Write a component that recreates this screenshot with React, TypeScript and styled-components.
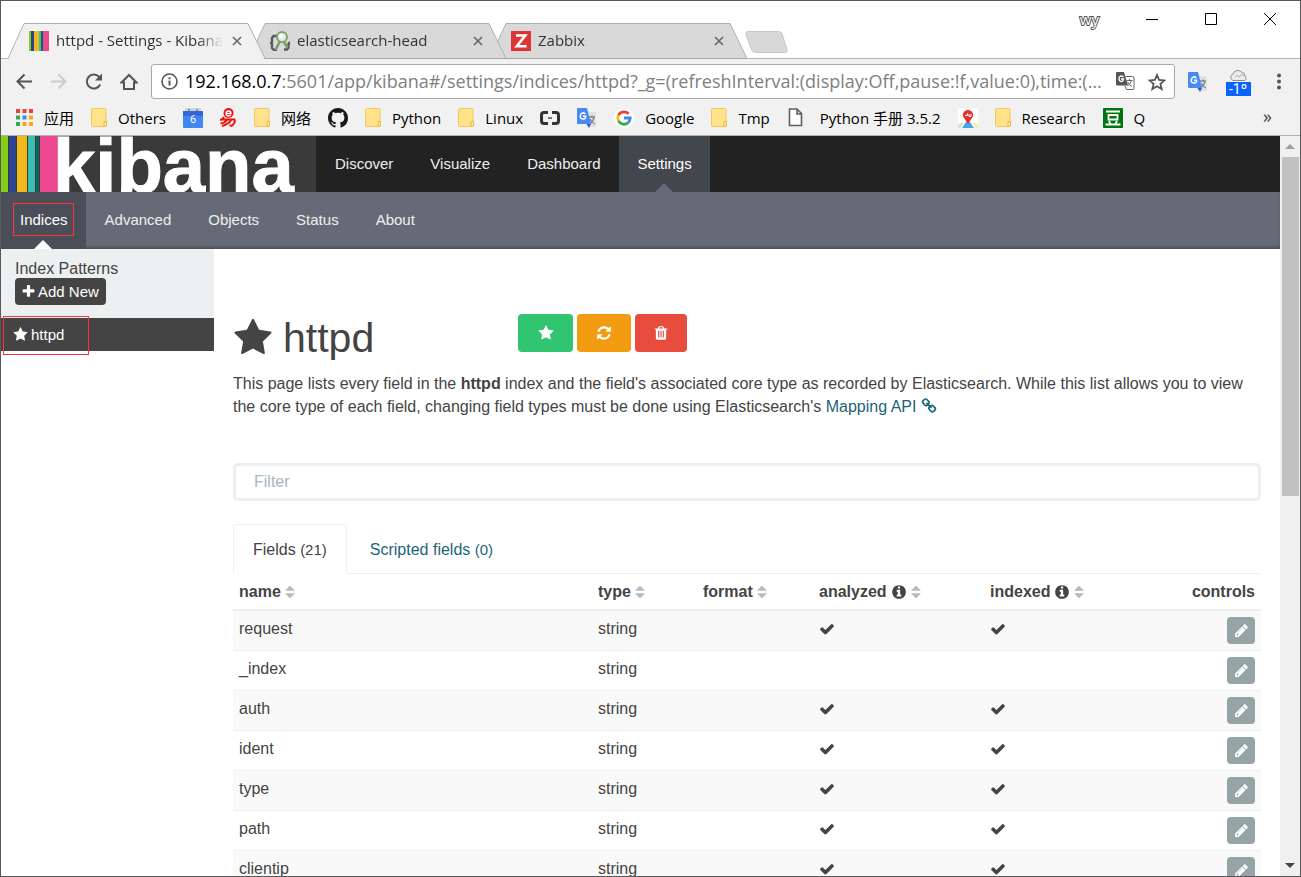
import React from 'react';
import styled, { createGlobalStyle, css } from 'styled-components';

const GlobalStyle = createGlobalStyle`
  * { box-sizing: border-box; }
  body { margin: 0; background: #fff; color: #444; font-family: "Liberation Sans", Arial, sans-serif; font-size: 16px; line-height: 23px; }
  button { font: inherit; border: 0; padding: 0; background: none; color: inherit; cursor: pointer; }
  a { color: inherit; text-decoration: none; }
  svg { display: block; flex: none; }
`;

/* ---------- icons ---------- */

const glyphs = {
  star: 'M1728 647q0 22-26 48l-363 354 86 500q1 7 1 20 0 21-10.5 35.5t-30.5 14.5q-19 0-40-12l-449-236-449 236q-22 12-40 12-21 0-31.5-14.5t-10.5-35.5q0-6 2-20l86-500-364-354q-25-27-25-48 0-37 56-46l502-73 225-455q19-41 49-41t49 41l225 455 502 73q56 9 56 46z',
  check: 'M1671 566q0 40-28 68l-724 724-136 136q-28 28-68 28t-68-28l-136-136-362-362q-28-28-28-68t28-68l136-136q28-28 68-28t68 28l294 295 656-657q28-28 68-28t68 28l136 136q28 28 28 68z',
  plus: 'M1600 736v192q0 40-28 68t-68 28h-416v416q0 40-28 68t-68 28h-192q-40 0-68-28t-28-68v-416h-416q-40 0-68-28t-28-68v-192q0-40 28-68t68-28h416v-416q0-40 28-68t68-28h192q40 0 68 28t28 68v416h416q40 0 68 28t28 68z',
  refresh: 'M1639 1056q0 5-1 7-64 268-268 434.5t-478 166.5q-146 0-282.5-55t-243.5-157l-129 129q-19 19-45 19t-45-19-19-45v-448q0-26 19-45t45-19h448q26 0 45 19t19 45-19 45l-137 137q71 66 161 102t187 36q134 0 250-65t186-179q11-17 53-117 8-23 30-23h192q13 0 22.5 9.5t9.5 22.5zm25-800v448q0 26-19 45t-45 19h-448q-26 0-45-19t-19-45 19-45l138-138q-148-137-349-137-134 0-250 65t-186 179q-11 17-53 117-8 23-30 23h-199q-13 0-22.5-9.5t-9.5-22.5v-7q65-268 270-434.5t480-166.5q146 0 284 55.5t245 156.5l130-129q19-19 45-19t45 19 19 45z',
  trash: 'M704 1376v-704q0-14-9-23t-23-9h-64q-14 0-23 9t-9 23v704q0 14 9 23t23 9h64q14 0 23-9t9-23zm256 0v-704q0-14-9-23t-23-9h-64q-14 0-23 9t-9 23v704q0 14 9 23t23 9h64q14 0 23-9t9-23zm256 0v-704q0-14-9-23t-23-9h-64q-14 0-23 9t-9 23v704q0 14 9 23t23 9h64q14 0 23-9t9-23zm-544-992h448l-48-117q-7-9-17-11h-317q-10 2-17 11zm928 32v64q0 14-9 23t-23 9h-96v948q0 83-47 143.5t-113 60.5h-832q-66 0-113-58.5t-47-141.5v-952h-96q-14 0-23-9t-9-23v-64q0-14 9-23t23-9h309l70-167q15-37 54-63t79-26h320q40 0 79 26t54 63l70 167h309q14 0 23 9t9 23z',
  info: 'M1152 1376v-160q0-14-9-23t-23-9h-96v-512q0-14-9-23t-23-9h-320q-14 0-23 9t-9 23v160q0 14 9 23t23 9h96v320h-96q-14 0-23 9t-9 23v160q0 14 9 23t23 9h448q14 0 23-9t9-23zm-128-896v-160q0-14-9-23t-23-9h-192q-14 0-23 9t-9 23v160q0 14 9 23t23 9h192q14 0 23-9t9-23zm640 416q0 209-103 385.5t-279.5 279.5-385.5 103-385.5-103-279.5-279.5-103-385.5 103-385.5 279.5-279.5 385.5-103 385.5 103 279.5 279.5 103 385.5z',
  sort: 'M1408 1088q0 26-19 45l-448 448q-19 19-45 19t-45-19l-448-448q-19-19-19-45t19-45 45-19h896q26 0 45 19t19 45zm0-384q0 26-19 45t-45 19h-896q-26 0-45-19t-19-45 19-45l448-448q19-19 45-19t45 19l448 448q19 19 19 45z',
  pencil: 'M491 1536l91-91-235-235-91 91v107h128v128h107zm523-928q0-22-22-22-10 0-17 7l-542 542q-7 7-7 17 0 22 22 22 10 0 17-7l542-542q7-7 7-17zm-54-192l416 416-832 832h-416v-416zm683 96q0 53-37 90l-166 166-416-416 166-165q36-38 90-38 53 0 91 38l235 234q37 39 37 91z',
  chain: 'M1520 1216q0-40-28-68l-208-208q-28-28-68-28-42 0-72 32 3 3 19 18.5t21.5 21.5 15 19 13 25.5 3.5 27.5q0 40-28 68t-68 28q-15 0-27.5-3.5t-25.5-13-19-15-21.5-21.5-18.5-19q-33 31-33 73 0 40 28 68l206 207q27 27 68 27 40 0 68-26l147-146q28-28 28-67zm-703-705q0-40-28-68l-206-207q-28-28-68-28-39 0-68 27l-147 146q-28 28-28 67 0 40 28 68l208 208q27 27 68 27 42 0 72-31-3-3-19-18.5t-21.5-21.5-15-19-13-25.5-3.5-27.5q0-40 28-68t68-28q15 0 27.5 3.5t25.5 13 19 15 21.5 21.5 18.5 19q33-31 33-73zm895 705q0 120-85 203l-147 146q-83 83-203 83-121 0-204-85l-206-207q-83-83-83-203 0-123 88-209l-88-88q-86 88-208 88-120 0-204-84l-208-208q-84-84-84-204t85-203l147-146q83-83 203-83 121 0 204 85l206 207q83 83 83 203 0 123-88 209l88 88q86-88 208-88 120 0 204 84l208 208q84 84 84 204z',
};

const GlyphSvg = styled.svg<{ $tone?: string }>`
  fill: ${(p) => p.$tone || 'currentColor'};
`;

function Glyph({ name, size = 16, tone }: { name: keyof typeof glyphs; size?: number; tone?: string }) {
  const narrow = name === 'sort';
  return (
    <GlyphSvg
      width={narrow ? 10 : size}
      height={size}
      viewBox={narrow ? '336 0 1120 1792' : '0 0 1792 1792'}
      $tone={tone}
      aria-hidden
    >
      <path d={glyphs[name]} />
    </GlyphSvg>
  );
}

const KibanaIcon = () => (
  <svg width="20" height="20">
    <path fill="#86cd17" d="M0 0h2v20H0z" />
    <path fill="#2b4590" d="M2 0h3v20H2z" />
    <path fill="#f2b91c" d="M5 0h5v20H5z" />
    <path fill="#3cbfb3" d="M10 0h2v20h-2z" />
    <path fill="#086a5f" d="M12 0h2v20h-2z" />
    <path fill="#ec478f" d="M14 0h6v20h-6z" />
  </svg>
);

const HeadIcon = () => (
  <svg width="20" height="20" fill="none">
    <path d="M7 5H3.500L2 7v4l-1 1 1 1v4l2 2h3M14 18.500h3l1.500-2V13l1-1-1-1" stroke="#565b5f" strokeWidth="2.400" />
    <path d="M9.500 11L6 18" stroke="#7d9e63" strokeWidth="2.600" strokeLinecap="round" />
    <path d="M14 11l3 5" stroke="#7d9e63" strokeWidth="2.600" strokeLinecap="round" />
    <circle cx="12" cy="6" r="5" fill="#dfeaf8" stroke="#7fa65c" strokeWidth="2" />
    <circle cx="11" cy="5" r="2" fill="#fff" />
  </svg>
);

const ZabbixIcon = () => (
  <svg width="20" height="20">
    <path fill="#dc3535" d="M0 0h20v20H0z" />
    <path fill="none" stroke="#fff" strokeWidth="2.600" d="M5 4.500h9.200L5.800 15.300H15.500" />
  </svg>
);

const FolderIcon = () => (
  <svg width="16" height="19">
    <path d="M1.500.5H14q1 0 1 1v11.500l1 1V17q0 1.500-1.500 1.500h-13Q.5 18.500.5 17V1.500q0-1 1-1z" fill="#ffe28a" stroke="#efc95c" />
    <path d="M13 18v-4.500h2.500V17q0 1-1 1z" fill="#ffe79b" stroke="#e8bb44" />
  </svg>
);

const AppsIcon = () => (
  <svg width="17" height="17">
    {['#ea4335', '#ea4335', '#ea4335', '#34a853', '#4285f4', '#fba81b', '#34a853', '#fba81b', '#fba81b'].map((c, i) => (
      <rect key={i} x={(i % 3) * 6.5} y={Math.floor(i / 3) * 6.5} width="4" height="4" fill={c} />
    ))}
  </svg>
);

const CalendarIcon = () => (
  <svg width="20" height="20">
    <path fill="#cfd2d6" d="M2 0h16v4H2z" />
    <path fill="#3367d6" d="M0 3h20v9H0z" />
    <path fill="#4285f4" d="M0 8h20v11q0 1-1 1H1q-1 0-1-1z" />
    <path fill="#8f9499" d="M5 1h2v2H5zM13 1h2v2h-2z" />
    <text x="10" y="15" textAnchor="middle" fontFamily="Roboto, sans-serif" fontSize="11" fill="#fff">6</text>
  </svg>
);

const NeteaseIcon = () => (
  <svg width="17" height="19" fill="none" stroke="#f20d0d">
    <circle cx="8.500" cy="5" r="5" fill="#f20d0d" stroke="none" />
    <path d="M6 5.500h5q0-2.500-2.500-2.500T6 5.500t3 2.500l2-1" stroke="#fff" strokeWidth="1.300" />
    <path d="M4 9Q3 11 0 12M2 11.500h12.500q1.500 3-3 6.500l-2-1M7 12q-2 3-6.500 3.500M11 12q-2 4-9 6" strokeWidth="1.900" />
  </svg>
);

const GithubIcon = () => (
  <svg width="20" height="20" viewBox="0 0 16 16">
    <path fill="#181616" d="M8 0C3.580 0 0 3.580 0 8c0 3.540 2.290 6.530 5.470 7.590.4.070.55-.17.55-.38 0-.19-.01-.82-.01-1.490-2.010.37-2.530-.49-2.690-.94-.09-.23-.48-.94-.82-1.130-.28-.15-.68-.52-.01-.53.63-.01 1.080.58 1.230.82.72 1.210 1.870.87 2.330.66.070-.52.28-.87.51-1.070-1.780-.2-3.640-.89-3.640-3.950 0-.87.31-1.590.82-2.150-.08-.2-.36-1.020.08-2.120 0 0 .67-.21 2.200.82.64-.18 1.320-.27 2-.27s1.360.09 2 .27c1.530-1.040 2.200-.82 2.200-.82.44 1.100.16 1.920.08 2.120.51.56.82 1.270.82 2.150 0 3.070-1.870 3.750-3.650 3.950.29.25.54.73.54 1.480 0 1.070-.01 1.930-.01 2.200 0 .21.15.46.55.38A8.010 8.010 0 0 0 16 8c0-4.420-3.580-8-8-8z" />
  </svg>
);

const BracketIcon = () => (
  <svg width="20" height="14" fill="none" stroke="#333" strokeWidth="3">
    <path d="M8 1.500H4Q1.500 1.500 1.500 4v6q0 2.500 2.500 2.500h4M12 1.500h4q2.500 0 2.500 2.500v6q0 2.500-2.500 2.500h-4" />
    <path d="M8 7h4" strokeWidth="2" stroke="#777" />
  </svg>
);

const TranslateIcon = () => (
  <svg width="20" height="20" fill="none">
    <path fill="#dfe1e3" d="M8 4h10q1 0 1 1v14h-8z" />
    <path stroke="#7a8894" strokeWidth="1.300" d="M12 9h6M15 7.500V9M17 9q-1 5-4.500 6.500M13 11q1.500 3.500 5 5" />
    <path fill="#4889f4" d="M1 0h9l4 16H1q-1 0-1-1V1q0-1 1-1z" />
    <path fill="#3a5bbf" d="M9.500 16H14l-2 4z" />
    <path stroke="#fff" strokeWidth="1.500" d="M8.300 6Q6.800 4.500 5.300 5T3.300 8t2.500 3T8.600 8.300H6" />
  </svg>
);

const GoogleIcon = () => (
  <svg width="20" height="20" viewBox="0 0 20 20" fill="none" strokeWidth="2.800">
    <circle cx="10" cy="10" r="10" fill="#fff" />
    <path stroke="#ea4335" d="M14.600 5.800A6.200 6.200 0 0 0 4.500 7.200" />
    <path stroke="#fbbc05" d="M4.500 7.200a6.200 6.200 0 0 0 0 5.600" />
    <path stroke="#34a853" d="M4.500 12.800a6.200 6.200 0 0 0 9.700 1.800" />
    <path stroke="#4285f4" d="M14.200 14.600A6.200 6.200 0 0 0 16.200 10H10" />
  </svg>
);

const FileIcon = () => (
  <svg width="22" height="19" viewBox="-1 0 22 19" fill="#fff" stroke="#5f5f5f" strokeWidth="1.600">
    <path d="M1.500 1H9l4.500 4.500V17.500h-12zM9 1v5h4.500" />
  </svg>
);

const MapIcon = () => (
  <svg width="20" height="20">
    <rect width="20" height="20" rx="2" fill="#fff" />
    <path fill="#cdeac0" d="M0 16l6-2-3 6H0z" />
    <path fill="#f5eeb4" d="M20 16l-6-2 3 6h3z" />
    <path fill="#4aa3f0" d="M8 14h4l4 6H4z" />
    <path fill="#e5322d" d="M10 16L6 10a5 5 0 1 1 8 0z" />
    <path stroke="#fff" d="M7 7.500h2.500V5.500M11 6v2.500h2V6" fill="none" />
  </svg>
);

const DoubanIcon = () => (
  <svg width="20" height="20">
    <rect width="20" height="20" rx="1" fill="#00750f" />
    <path fill="none" stroke="#fff" strokeWidth="1.800" d="M3 3.500h14M5.500 7h9v4.500h-9zM6 13l1.500 3M14 13l-1.500 3M2.500 16.500h15" />
  </svg>
);

const AddressTranslateIcon = () => (
  <svg width="19" height="19" fill="none">
    <path d="M9.500 4.500h7q1.500 0 1.500 1.500v10.500q0 1-1 1h-6.500L9 14" stroke="#666" fill="#fff" />
    <path d="M10.500 8.500h6M13.500 7v1.500M15.500 8.500q-1 4-4 5.500M11.500 10q1.500 3 4.500 4.500" stroke="#666" />
    <path d="M1 0h7l4 13.500H1q-1 0-1-1V1q0-1 1-1z" fill="#555" />
    <path d="M7.500 5Q6 3.500 4.500 4.200T3 7t2 2.500T7.500 7H5" stroke="#fff" strokeWidth="1.400" />
  </svg>
);

const WeatherIcon = () => (
  <svg width="26" height="28">
    <path d="M7 12.500a3.500 3.500 0 0 1 0-6.500 5 4.500 0 0 1 9-1.500 3.500 3.500 0 0 1 3 3.500 3 3 0 0 1 0 4.500z" fill="#ececec" stroke="#8d8d8d" />
    <path d="M9 9q2-3 5 0M14 8q2-3 4 0" fill="none" stroke="#aaa" />
    <path fill="#0a62ff" d="M0 14h25v14H0z" />
    <text x="12" y="26" textAnchor="middle" fontFamily="Roboto, sans-serif" fontSize="14" fill="#fff">-1º</text>
  </svg>
);

/* ---------- browser frame ---------- */

const Browser = styled.div`
  height: 100vh;
  display: flex;
  flex-direction: column;
  border: 1px solid #58585a;
  overflow: hidden;
`;

const uiFont = css`
  font-family: "Open Sans", "Noto Sans CJK SC", sans-serif;
`;

const TabStrip = styled.header`
  ${uiFont}
  display: flex;
  align-items: flex-end;
  height: 58px;
  flex: none;
  padding-left: 7px;
  font-size: 15px;
  line-height: 20px;
  box-shadow: inset 0 -1px #b5b5b5;
`;

const Tab = styled.div<{ $level: number }>`
  position: relative;
  z-index: ${(p) => p.$level};
  display: flex;
  align-items: center;
  gap: 7px;
  width: 257px;
  height: 36px;
  padding: 0 21px;
  & + & { margin-left: -16px; }
`;

const TabShape = styled.svg`
  position: absolute;
  inset: 0;
  z-index: -1;
`;

const TabTitle = styled.span`
  flex: 1;
  padding-bottom: 2px;
  overflow: hidden;
  white-space: nowrap;
  color: #333;
  mask-image: linear-gradient(to right, #000 85%, transparent);
`;

const TabClose = styled.button`
  display: flex;
  padding: 2px;
`;

const NewTab = styled.button`
  margin: 0 0 6px -2px;
`;

const WindowControls = styled.div`
  display: flex;
  align-items: center;
  align-self: flex-start;
  gap: 47px;
  height: 36px;
  margin-left: auto;
  padding-right: 24px;
`;

const Profile = styled.span`
  color: #fff;
  -webkit-text-stroke: 2px #555;
  paint-order: stroke fill;
`;

const Toolbar = styled.div`
  ${uiFont}
  display: flex;
  align-items: center;
  height: 45px;
  flex: none;
  padding: 0 12px 0 14px;
  gap: 13px;
  background: #f1f1f1;
`;

const NavButtons = styled.div`
  display: flex;
  gap: 17px;
`;

const Extensions = styled.div`
  display: flex;
  align-items: center;
  gap: 18px;
`;

const ToolButton = styled.button`
  display: flex;
  flex: none;
`;

const AddressBar = styled.div`
  display: flex;
  align-items: center;
  flex: 1;
  min-width: 0;
  height: 35px;
  padding: 0 8px 0 9px;
  border: 1px solid #a9a9a9;
  border-radius: 3px;
  background: #fff;
  font-size: 18px;
  line-height: 24px;
  color: #000;
`;

const Host = styled.label`
  padding: 0 0 2px 7px;
`;

const UrlInput = styled.input`
  flex: 1;
  min-width: 0;
  border: 0;
  padding: 0 0 2px;
  font: inherit;
  color: #808080;
  outline: 0;
  text-overflow: ellipsis;
`;

const AddressActions = styled.div`
  display: flex;
  align-items: center;
  gap: 13px;
`;

const BookmarkBar = styled.nav`
  ${uiFont}
  display: flex;
  align-items: center;
  gap: 17px;
  height: 32px;
  flex: none;
  padding: 0 28px 4px 15px;
  background: #f1f1f1;
  border-bottom: 1px solid #b0b0b0;
  font-size: 15px;
  line-height: 20px;
  color: #000;
`;

const Bookmark = styled.a`
  display: flex;
  align-items: center;
  gap: 11px;
  white-space: nowrap;
`;

const Overflow = styled.button`
  margin-left: auto;
  padding-bottom: 4px;
  font-size: 18px;
  color: #444;
`;

const Viewport = styled.div`
  display: flex;
  flex: 1;
  min-height: 0;
`;

const Page = styled.div`
  flex: 1;
  min-width: 0;
  overflow: hidden;
`;

const ScrollBar = styled.div`
  display: flex;
  flex-direction: column;
  align-items: center;
  justify-content: space-between;
  width: 20px;
  background: #f0f0f0;
`;

const ScrollTrack = styled.div`
  flex: 1;
  align-self: stretch;
  padding: 0 1px 0 2px;
`;

const ScrollThumb = styled.div`
  height: 48.5%;
  background: #c1c1c1;
`;

const ScrollButton = styled.button`
  display: flex;
  align-items: center;
  justify-content: center;
  height: 21px;
  width: 20px;
`;

/* ---------- kibana ---------- */

const NavBar = styled.nav<{ $sub?: boolean }>`
  display: flex;
  height: ${(p) => (p.$sub ? 57 : 56)}px;
  background: ${(p) => (p.$sub ? '#656a76' : '#222')};
  box-shadow: ${(p) => (p.$sub ? 'inset 0 -3px 3px -1px #4a4e58' : 'none')};
  font-size: 15px;
`;

const Logo = styled.a`
  width: 315px;
  background: #3a3a3a;
`;

const NavItem = styled.a<{ $active?: string; $arrow?: string }>`
  position: relative;
  display: flex;
  align-items: center;
  padding: 0 18px 2px 19px;
  color: ${(p) => (p.$active ? '#fff' : '#ecf0f1')};
  background: ${(p) => p.$active || 'transparent'};
  ${(p) =>
    p.$arrow &&
    css`
      &::after {
        content: '';
        position: absolute;
        bottom: 0;
        left: 50%;
        margin-left: -9px;
        border: solid transparent;
        border-width: 0 9px 9px;
        border-bottom-color: ${p.$arrow};
      }
    `}
`;

const Marker = styled.span`
  position: absolute;
  border: 1px solid #f33;
  pointer-events: none;
`;

const TabMarker = styled(Marker)<{ $quiet?: boolean }>`
  inset: 11px 12px 13px;
  border-color: ${(p) => (p.$quiet ? '#777c87' : '#f33')};
`;

const RowMarker = styled(Marker)`
  top: -2px;
  left: 2px;
  width: 86px;
  height: 39px;
`;

const Columns = styled.div`
  display: flex;
  align-items: flex-start;
`;

const Sidebar = styled.aside`
  width: 213px;
  flex: none;
`;

const SidebarHead = styled.div`
  height: 69px;
  padding: 11px 14px 0;
  background: #ecf0f1;
  line-height: 18px;
`;

const AddButton = styled.button`
  display: flex;
  align-items: center;
  gap: 2px;
  height: 27px;
  padding: 0 7px 0 6px;
  border-radius: 4px;
  background: #444;
  color: #fff;
  font-size: 15px;
`;

const PatternLink = styled.a`
  position: relative;
  display: flex;
  align-items: center;
  gap: 3px;
  height: 33px;
  padding: 0 12px;
  background: #444;
  color: #fff;
  font-size: 15px;
`;

const Main = styled.main`
  flex: 1;
  min-width: 0;
  padding: 65px 19px 0;
`;

const TitleRow = styled.div`
  display: flex;
  align-items: flex-start;
`;

const Title = styled.h1`
  display: flex;
  align-items: center;
  gap: 10px;
  width: 285px;
  margin: 0;
  font-size: 41px;
  font-weight: 400;
  line-height: 48px;
`;

const Actions = styled.div`
  display: flex;
  gap: 4px;
`;

const ActionButton = styled.button<{ $tone: string; $w: number }>`
  display: flex;
  align-items: center;
  justify-content: center;
  width: ${(p) => p.$w}px;
  height: 38px;
  border-radius: 4px;
  background: ${(p) => p.$tone};
  color: #fff;
`;

const Intro = styled.p`
  margin: 10px 0 45px;
  svg { display: inline-block; vertical-align: -2px; }
`;

const DocLink = styled.a`
  color: #1b6578;
`;

const FilterInput = styled.input`
  display: block;
  width: 100%;
  height: 38px;
  padding: 0 18px;
  border: 3px solid #ecf0f1;
  border-radius: 5px;
  background: #fff;
  color: #444;
  font: inherit;
  &::placeholder { color: #acb6c0; opacity: 1; }
`;

const FieldTabs = styled.div`
  display: flex;
  margin-top: 23px;
  border-bottom: 1px solid #ecf0f1;
`;

const FieldTab = styled.button<{ $active?: boolean }>`
  height: 50px;
  margin: 0 3px -1px 0;
  padding: 0 19px;
  border: 1px solid ${(p) => (p.$active ? '#ecf0f1' : 'transparent')};
  border-bottom-color: ${(p) => (p.$active ? '#fff' : 'transparent')};
  border-radius: 4px 4px 0 0;
  color: ${(p) => (p.$active ? '#444' : '#1b6578')};
  small { font-size: 15px; }
`;

const Table = styled.table`
  width: 100%;
  border-collapse: collapse;
  table-layout: fixed;
`;

const HeadCell = styled.th<{ $w?: number }>`
  width: ${(p) => (p.$w ? `${p.$w}px` : 'auto')};
  height: 36px;
  padding: 0 6px;
  border-bottom: 2px solid #ecf0f1;
  text-align: left;
  &:last-child { text-align: right; }
`;

const HeadLabel = styled.span`
  display: inline-flex;
  align-items: center;
  gap: 4px;
`;

const FieldRow = styled.tr`
  border-top: 1px solid #ecf0f1;
  &:nth-child(odd) { background: #f9f9f9; }
`;

const Cell = styled.td`
  height: 40px;
  padding: 6px 6px 5px;
  vertical-align: top;
  line-height: 23px;
`;

const CheckCell = styled(Cell)`
  padding-top: 10px;
`;

const EditButton = styled.button`
  display: flex;
  align-items: center;
  justify-content: center;
  width: 28px;
  height: 27px;
  margin-left: auto;
  border-radius: 4px;
  background: #95a5a6;
  color: #fff;
`;

const fields = [
  { name: 'request', marked: true },
  { name: '_index', marked: false },
  { name: 'auth', marked: true },
  { name: 'ident', marked: true },
  { name: 'type', marked: true },
  { name: 'path', marked: true },
  { name: 'clientip', marked: true },
];

const tabs = [
  { title: 'httpd - Settings - Kibana', icon: <KibanaIcon />, active: true },
  { title: 'elasticsearch-head', icon: <HeadIcon /> },
  { title: 'Zabbix', icon: <ZabbixIcon /> },
];

const bookmarks: { icon: React.ReactNode; label?: string; name?: string }[] = [
  { icon: <AppsIcon />, label: '应用' },
  { icon: <FolderIcon />, label: 'Others' },
  { icon: <CalendarIcon />, name: 'Calendar' },
  { icon: <NeteaseIcon />, name: 'Mail' },
  { icon: <FolderIcon />, label: '网络' },
  { icon: <GithubIcon />, name: 'GitHub' },
  { icon: <FolderIcon />, label: 'Python' },
  { icon: <FolderIcon />, label: 'Linux' },
  { icon: <BracketIcon />, name: 'Code' },
  { icon: <TranslateIcon />, name: 'Translate' },
  { icon: <GoogleIcon />, label: 'Google' },
  { icon: <FolderIcon />, label: 'Tmp' },
  { icon: <FileIcon />, label: 'Python 手册 3.5.2' },
  { icon: <MapIcon />, name: 'Map' },
  { icon: <FolderIcon />, label: 'Research' },
  { icon: <DoubanIcon />, label: 'Q' },
];

function SortHead({ label, info, width }: { label: string; info?: boolean; width?: number }) {
  return (
    <HeadCell $w={width}>
      <HeadLabel>
        {label}
        {info && <Glyph name="info" />}
        <Glyph name="sort" tone="#b4bcc2" />
      </HeadLabel>
    </HeadCell>
  );
}

export default function App() {
  return (
    <Browser>
      <GlobalStyle />
      <TabStrip>
        {tabs.map((t, i) => (
          <Tab key={t.title} $level={tabs.length - i}>
            <TabShape width="257" height="36" aria-hidden>
              <path d="M0 35.500L16 .5H240L257 35.500" fill={t.active ? '#f1f1f1' : '#d9d9d9'} stroke="#b0b0b0" />
              {t.active ? <path d="M1 35.500H256" stroke="#f1f1f1" /> : <path d="M0 35.500H257" stroke="#a5a5a5" />}
            </TabShape>
            {t.icon}
            <TabTitle>{t.title}</TabTitle>
            <TabClose aria-label="Close tab">
              <svg width="10" height="10" stroke="#666" strokeWidth="1.600">
                <path d="M1 1l8 8M9 1l-8 8" />
              </svg>
            </TabClose>
          </Tab>
        ))}
        <NewTab aria-label="New tab">
          <svg width="43" height="22">
            <path d="M3 .5h31q2 0 3 2l5 16q1 3-2 3H11q-3 0-4-2L1 4Q0 .5 3 .5z" fill="#d8d8d8" stroke="#c6c6c6" />
          </svg>
        </NewTab>
        <WindowControls>
          <Profile>wy</Profile>
          <ToolButton aria-label="Minimize">
            <svg width="12" height="12"><path d="M0 6.500h12" stroke="#000" /></svg>
          </ToolButton>
          <ToolButton aria-label="Maximize">
            <svg width="12" height="12"><path d="M.5.5h11v11H.5z" stroke="#000" fill="none" /></svg>
          </ToolButton>
          <ToolButton aria-label="Close">
            <svg width="12" height="12"><path d="M0 0l12 12M12 0L0 12" stroke="#000" /></svg>
          </ToolButton>
        </WindowControls>
      </TabStrip>

      <Toolbar>
        <NavButtons>
          <ToolButton aria-label="Back">
            <svg width="18" height="18" fill="none" stroke="#555" strokeWidth="2"><path d="M17 8.500H2.500M9.500 1.500l-7 7 7 7" /></svg>
          </ToolButton>
          <ToolButton aria-label="Forward">
            <svg width="18" height="18" fill="none" stroke="#ccc" strokeWidth="2"><path d="M1 8.500h14.500M8.500 1.500l7 7-7 7" /></svg>
          </ToolButton>
          <ToolButton aria-label="Reload">
            <svg width="18" height="18" fill="none" stroke="#555" strokeWidth="2">
              <path d="M15.200 11.500A7 7 0 1 1 14 3.700" />
              <path d="M17 .5v7h-7z" fill="#555" stroke="none" />
            </svg>
          </ToolButton>
          <ToolButton aria-label="Home">
            <svg width="18" height="18" fill="none" stroke="#555" strokeWidth="2"><path d="M1.500 9.500L9 2l7.500 7.500H14V16H4V9.500z" /></svg>
          </ToolButton>
        </NavButtons>
        <AddressBar>
          <svg width="17" height="17" fill="none" stroke="#555" strokeWidth="1.600">
            <circle cx="8.500" cy="8.500" r="7.500" />
            <path d="M8.500 7.500v5M8.500 4.200v2" strokeWidth="2" />
          </svg>
          <Host htmlFor="url">192.168.0.7</Host>
          <UrlInput
            id="url"
            readOnly
            value=":5601/app/kibana#/settings/indices/httpd?_g=(refreshInterval:(display:Off,pause:!f,value:0),time:(…"
          />
          <AddressActions>
            <ToolButton aria-label="Translate page"><AddressTranslateIcon /></ToolButton>
            <ToolButton aria-label="Bookmark page">
              <svg width="18" height="18" fill="none" stroke="#555" strokeWidth="1.800">
                <path d="M9 2l2.100 4.900 5.400.5-4.100 3.500 1.300 5.200L9 13.300l-4.700 2.800 1.300-5.200L1.500 7.400l5.400-.5z" />
              </svg>
            </ToolButton>
          </AddressActions>
        </AddressBar>
        <Extensions>
          <ToolButton aria-label="Translate"><TranslateIcon /></ToolButton>
          <ToolButton aria-label="Weather"><WeatherIcon /></ToolButton>
          <ToolButton aria-label="Menu">
            <svg width="18" height="18" fill="#555">
              <circle cx="9" cy="2.500" r="2" /><circle cx="9" cy="8.500" r="2" /><circle cx="9" cy="14.500" r="2" />
            </svg>
          </ToolButton>
        </Extensions>
      </Toolbar>

      <BookmarkBar>
        {bookmarks.map((b, i) => (
          <Bookmark key={i} href="#" aria-label={b.label ?? b.name}>
            {b.icon}
            {b.label}
          </Bookmark>
        ))}
        <Overflow>»</Overflow>
      </BookmarkBar>

      <Viewport>
        <Page>
          <NavBar>
            <Logo href="#" aria-label="kibana">
              <svg width="315" height="56">
                <path fill="#86cd17" d="M0 0h7v56H0z" />
                <path fill="#2b4590" d="M8 0h7v56H8z" />
                <path fill="#f2b91c" d="M16 0h10v56H16z" />
                <path fill="#3cbfb3" d="M27 0h7v56h-7z" />
                <path fill="#086a5f" d="M35 0h3v56h-3z" />
                <path fill="#ec478f" d="M39 0h18v56H39z" />
                <text x="52" y="56" fontFamily="Liberation Sans, sans-serif" fontWeight="700" fontSize="76" fill="#fff" stroke="#fff">kibana</text>
              </svg>
            </Logo>
            <NavItem href="#">Discover</NavItem>
            <NavItem href="#">Visualize</NavItem>
            <NavItem href="#">Dashboard</NavItem>
            <NavItem href="#" $active="#42464d" $arrow="#656a76">Settings</NavItem>
          </NavBar>
          <NavBar $sub>
            <NavItem href="#" $active="#4a4e59" $arrow="#fff">
              Indices
              <TabMarker />
            </NavItem>
            <NavItem href="#">Advanced</NavItem>
            <NavItem href="#">Objects</NavItem>
            <NavItem href="#">Status</NavItem>
            <NavItem href="#">About</NavItem>
          </NavBar>
          <Columns>
            <Sidebar>
              <SidebarHead>
                Index Patterns
                <AddButton><Glyph name="plus" size={15} />Add New</AddButton>
              </SidebarHead>
              <PatternLink href="#">
                <Glyph name="star" size={15} />httpd
                <RowMarker />
              </PatternLink>
            </Sidebar>
            <Main>
              <TitleRow>
                <Title><Glyph name="star" size={40} />httpd</Title>
                <Actions>
                  <ActionButton $tone="#31c471" $w={55} aria-label="Set as default"><Glyph name="star" /></ActionButton>
                  <ActionButton $tone="#f39c12" $w={54} aria-label="Refresh fields"><Glyph name="refresh" /></ActionButton>
                  <ActionButton $tone="#e74c3c" $w={52} aria-label="Remove index"><Glyph name="trash" /></ActionButton>
                </Actions>
              </TitleRow>
              <Intro>
                This page lists every field in the <b>httpd</b> index and the field's associated core type as recorded by
                Elasticsearch. While this list allows you to view the core type of each field, changing field types must be
                done using Elasticsearch's <DocLink href="#">Mapping API <Glyph name="chain" /></DocLink>
              </Intro>
              <FilterInput placeholder="Filter" aria-label="Filter" />
              <FieldTabs>
                <FieldTab $active>Fields <small>(21)</small></FieldTab>
                <FieldTab>Scripted fields <small>(0)</small></FieldTab>
              </FieldTabs>
              <Table>
                <thead>
                  <tr>
                    <SortHead label="name" />
                    <SortHead label="type" width={105} />
                    <SortHead label="format" width={116} />
                    <SortHead label="analyzed" width={171} info />
                    <SortHead label="indexed" width={171} info />
                    <HeadCell $w={106}>controls</HeadCell>
                  </tr>
                </thead>
                <tbody>
                  {fields.map((f) => (
                    <FieldRow key={f.name}>
                      <Cell>{f.name}</Cell>
                      <Cell>string</Cell>
                      <Cell />
                      <CheckCell>{f.marked && <Glyph name="check" />}</CheckCell>
                      <CheckCell>{f.marked && <Glyph name="check" />}</CheckCell>
                      <Cell><EditButton aria-label={`Edit ${f.name}`}><Glyph name="pencil" size={15} /></EditButton></Cell>
                    </FieldRow>
                  ))}
                </tbody>
              </Table>
            </Main>
          </Columns>
        </Page>
        <ScrollBar>
          <ScrollButton aria-label="Scroll up">
            <svg width="10" height="5"><path d="M0 5l5-5 5 5z" fill="#a0a0a0" /></svg>
          </ScrollButton>
          <ScrollTrack><ScrollThumb /></ScrollTrack>
          <ScrollButton aria-label="Scroll down">
            <svg width="10" height="5"><path d="M0 0l5 5 5-5z" fill="#444" /></svg>
          </ScrollButton>
        </ScrollBar>
      </Viewport>
    </Browser>
  );
}
